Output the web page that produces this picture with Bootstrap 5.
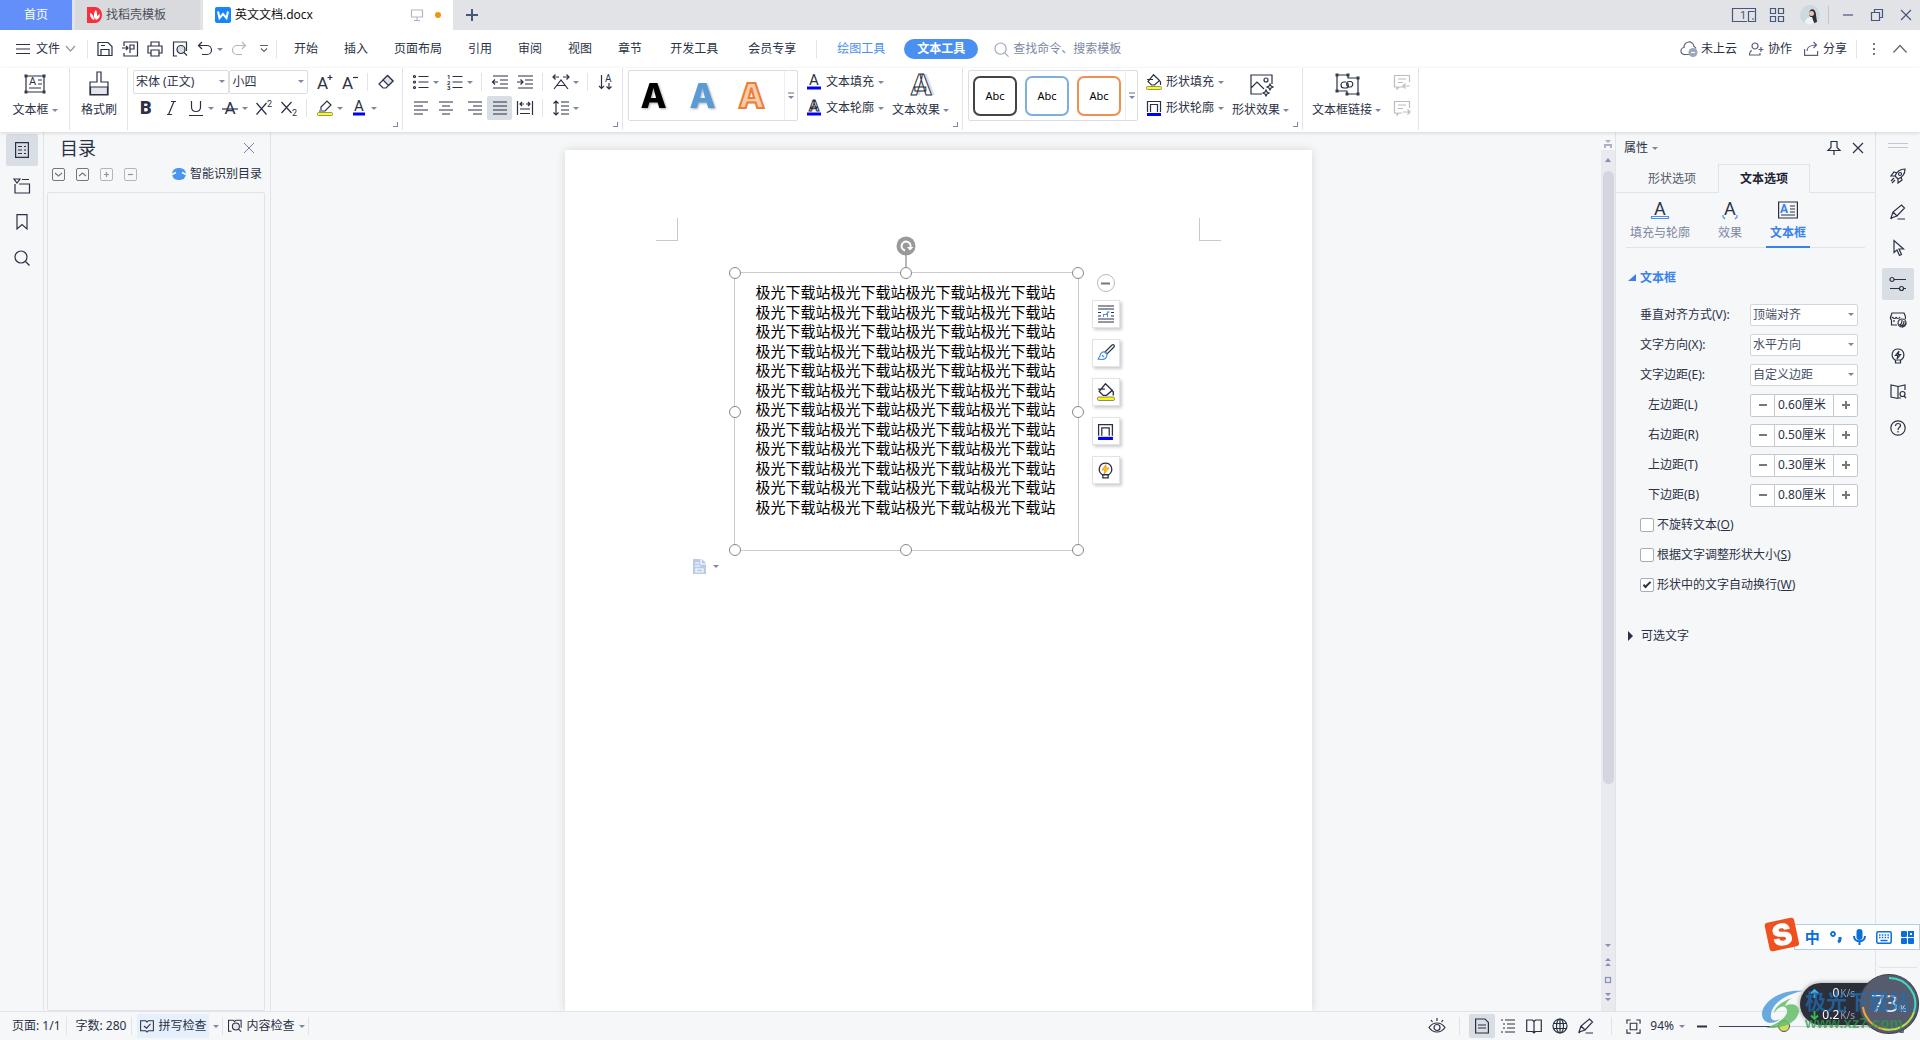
<!DOCTYPE html>
<html lang="zh-CN">
<head>
<meta charset="utf-8">
<meta name="viewport" content="width=device-width, initial-scale=1">
<title>英文文档.docx</title>
<link rel="stylesheet" href="https://cdn.jsdelivr.net/npm/bootstrap@5.3.0/dist/css/bootstrap.min.css">
<script src="https://cdn.jsdelivr.net/npm/bootstrap@5.3.0/dist/js/bootstrap.bundle.min.js"></script>
<style>
:root{--ink:#2a3145;--line:#e1e3e8;--panel:#f6f7f9;--muted:#7d87a2;--accent:#3a82e8;--hot:#d9dde4}
body{font:12px/16px "Noto Sans","Noto Sans CJK SC",sans-serif;color:var(--ink);background:var(--panel);height:100vh;overflow:hidden}
svg{fill:none;flex:none;overflow:visible}
svg:not([stroke]){stroke:currentColor}
svg:not([stroke-width]){stroke-width:1.2}
svg text{fill:currentColor;stroke:none;font-family:Roboto,sans-serif}
.bt{display:inline-flex;align-items:center;justify-content:center;border:0;border-radius:2px;padding:0;font-size:12px;line-height:16px;color:var(--ink);white-space:nowrap;flex:none}
.sq{width:25px;height:24px}
.on{background:var(--hot)}
.tri{border:3px solid transparent;border-top-color:var(--muted);border-bottom:0;width:6px;height:3px;display:inline-block;flex:none}
.cr{width:9px;justify-content:flex-start;height:24px}
.vr1{width:1px;align-self:center;background:var(--line);height:18px;margin:0 5px;flex:none}
/* title bar */
.titlebar{height:30px;background:#e1e3e7;color:#48567c;flex:none}
.tab-home,.tab-home:hover{width:72px;background:#638ffb;color:#fff;border-radius:0}
.tab-doc{height:30px;text-decoration:none;color:#4b4f59}
.tab-shop{width:125px;background:#d9dadd;margin:0 3px}
.tab-open{width:250px;background:#fff;color:#111}
.dot{width:6px;height:6px;border-radius:50%;background:#e8990c}
.win{width:29px;height:30px;color:#48567c}
/* menu */
.menubar{height:38px;background:#fff;flex:none}
.filemenu{gap:6px}
.menubar a{color:var(--ink);text-decoration:none;padding:0 13px;white-space:nowrap}
.menubar a.wide{padding:0 15px}
.menubar a.draw{color:#4a90f0;padding:0 19px 0 15px}
.menubar a.pill{background:#4a8ff2;color:#fff;font-weight:700;border-radius:10px;line-height:20px}
.finder{border:0;outline:0;width:140px;padding:0;color:var(--muted);font-size:12px;line-height:16px}
.finder::placeholder{color:var(--muted)}
/* ribbon */
.ribbon{height:64px;background:#fff;box-shadow:0 1px 4px #0002;flex:none;position:relative;z-index:3}
.grp{border-right:1px solid var(--line);height:62px;padding:2px 4px 0 5px;position:relative;flex:none}
.g-box{width:70px}.g-brush{width:58px}.g-font{width:275px}.g-para{width:220px}.g-art{width:340px}.g-link{width:116px}
.stack{display:flex;flex-direction:column;gap:2px}
.corner{position:absolute;right:4px;bottom:3px;width:5px;height:5px;border:solid var(--muted);border-width:0 1px 1px 0}
.big{flex-direction:column;height:50px;gap:5px;justify-content:flex-end;padding-bottom:2px}
.big svg{width:26px;height:26px}
.lab{display:flex;align-items:center;gap:3px}
.fontpick{position:relative}
.face{width:97px}.size{width:79px}
.fontpick::after,.pick::after{content:"";position:absolute;right:4px;top:50%;margin-top:-2px;border:3px solid transparent;border-top-color:var(--muted);border-bottom:0;pointer-events:none}
.fontpick select,.pick select{appearance:none;border:1px solid #dcdee3;background:#fff;font-size:12px;line-height:16px;color:var(--ink);width:100%;height:24px;padding:0 2px;border-radius:2px}
.gal{width:170px;height:51px;border:1px solid #dcdee3;border-radius:2px}
.gal .more{width:13px;border-left:1px solid #eceef1;border-radius:0;align-self:stretch}
.gal .more svg{color:var(--muted)}
.art{font:800 34px/44px Inter,sans-serif;width:49px;height:49px;color:#000;filter:drop-shadow(1px 1px 1px #0005)}
.art.sky{color:#5b9bd5}
.art.hollow{color:#f8cbad;-webkit-text-stroke:2px #ed7d31;filter:none}
.chip{width:44px;height:40px;border:2px solid #444;border-radius:7px;background:#fff;margin:0 4px;font-size:11px;color:#000}
.chip.sky{border-color:#7db0e0}.chip.sun{border-color:#f0904f}
.rt{gap:4px;height:24px}
.outl{fill:#fff;stroke:#2a3145;stroke-width:1}
/* panels */
.rail{width:44px;border-right:1px solid var(--line);gap:4px;padding-top:2px}
.rail .bt{width:32px;height:32px}
.toc{width:227px;border-right:1px solid var(--line)}
.toc h1{font-size:18px;line-height:24px;font-weight:400;margin:0}
.tools{padding:6px 8px;gap:11px}
.tocbox{border:1px solid var(--line);border-radius:2px;margin:4px 5px 0 3px}
.mini{width:13px;height:13px;border:1px solid #777;border-radius:2px;color:#777}
.mini:disabled{border-color:#777;opacity:.5}
/* canvas */
.canvas{padding:18px 0 0 4px;overflow:hidden}
.sheet{width:747px;background:#fff;box-shadow:0 0 9px #0002;position:relative}
.crop{position:absolute;top:68px;width:22px;height:23px;border:solid #c9c9c9;border-width:0 0 1px}
.crop.l{left:91px;border-right-width:1px}.crop.r{right:91px;border-left-width:1px}
.tbox{position:absolute;left:169px;top:122px;width:345px;height:279px;border:1px solid #cbcbd0;padding:11px 21px 36px}
.tbox p{margin:0;font:15px/15px "Noto Sans CJK SC",sans-serif;color:#000;white-space:nowrap}
.hd{position:absolute;width:12px;height:12px;border:1px solid #888;border-radius:50%;background:#fff;margin:-6px}
.float{position:absolute;left:527px;top:124px;gap:11px}
.float .bt{width:28px;height:28px;background:#fff;border:1px solid #e3e3e6;border-radius:0;box-shadow:2px 2px 3px #0003}
.float .fold{width:18px;height:18px;border-radius:50%;border:1px solid #bbb;box-shadow:none;margin-bottom:-3px}
.paste{position:absolute;left:128px;top:409px;gap:7px}
.sbar{width:14px;background:#e9eaf0;color:#8791ad}
.sbar .cap{height:18px;background:var(--panel)}
.thumb{width:11px;height:613px;border-radius:6px;background:#d3d6e0}
/* properties */
.props{width:261px;border-left:1px solid var(--line);border-right:1px solid var(--line)}
.phead{height:32px}
.ptabs{border-bottom:1px solid var(--line);padding-left:10px;height:29px}
.ptabs .bt{width:92px;height:29px;border-radius:0;color:#555b6b}
.ptabs .cur{border:1px solid var(--line);border-bottom:0;background:var(--panel);font-weight:700;color:#1c2233}
.stabs{margin:0 10px;border-bottom:1px solid var(--line);height:55px}
.stabs .bt{flex-direction:column;gap:6px;color:var(--muted);border-radius:0;border-bottom:2px solid transparent;height:55px;justify-content:flex-end;padding-bottom:5px}
.stabs svg{color:var(--ink)}
.stabs .cur{color:var(--accent);font-weight:700;border-color:var(--accent)}
.sect{color:var(--accent);font-weight:700;height:28px}
.prow{height:30px}
.later{margin-top:21px}
.prow label.nm{width:110px}
.pick{width:108px;position:relative}
.pick select{height:22px;color:#454e66;border-color:#d3d6dc}
.stepper{width:108px;height:23px;border:1px solid #c4c8d0;border-radius:2px;background:#fff}
.stepper .bt{width:23px;color:#777}
.stepper input{width:60px;border:solid #c4c8d0;border-width:0 1px;padding:0 0 0 3px;font-size:12px;line-height:16px;color:var(--ink);outline:0}
.tick{appearance:none;width:14px;height:14px;border:1px solid #a9adb8;border-radius:2px;background:#fff;margin:0 3px 0 0;position:relative}
.tick:checked::after{content:"";position:absolute;left:4px;top:1px;width:4px;height:8px;border:solid var(--ink);border-width:0 2px 2px 0;transform:rotate(45deg)}
.rr{width:44px;gap:4px;padding-top:10px}
.rr .bt{width:32px;height:32px}
.rrfoot{width:38px;height:44px;border-top:1px solid var(--line)}
/* status */
.status{height:29px;border-top:1px solid var(--line);flex:none}
.status .sq{width:26px}
.spell{background:#e6effc;height:24px;padding:0 3px;border-radius:0}
.pct{gap:5px}
.zoomer{appearance:none;width:163px;height:14px;background:none;margin:0}
.zoomer::-webkit-slider-runnable-track{height:1px;background:linear-gradient(90deg,#3a4258 40%,#c9cdd6 40%)}
.zoomer::-webkit-slider-thumb{appearance:none;width:12px;height:12px;margin-top:-6px;border:1px solid #555;border-radius:50%;background:#d3dc62}
/* desktop overlays */
.ime{position:fixed;right:0;top:924px;width:126px;height:26px;background:#fff;border:1px solid #b5cdec;color:#0a6fd8;padding-left:5px;z-index:5}
.ime strong{font-size:15px}
.sogou{position:fixed;right:120px;top:917px;z-index:6}
.sogou text{font:900 30px Inter,sans-serif;fill:#fff;text-anchor:middle}
.speed{position:fixed;right:30px;top:983px;width:90px;height:42px;border-radius:21px;background:#2b2f3a;box-shadow:0 0 5px #0006;color:#fff;z-index:5;padding:2px 35px 2px 11px;font-size:12px}
.speed em{font-style:normal;font-size:10px;color:#9aa0ae;margin-left:1px}
.ball{position:fixed;right:1px;top:974px;z-index:7}
.ball text{font-family:"Noto Sans",sans-serif;fill:#d9ecfa}
.brand{position:fixed;right:10px;top:986px;z-index:8;pointer-events:none}
.brand .cn{font:700 21px/28px "Noto Sans CJK SC",sans-serif;color:#1f6fb5bb}
.brand .en{font:700 15px/18px "Liberation Sans",sans-serif;color:#2f9b45bb}
</style>
</head>
<body class="d-flex flex-column">
<svg width="0" height="0" class="position-absolute" aria-hidden="true">
<symbol id="bucket" viewBox="0 0 16 16"><path d="M7.500 .7 13 6v1l-4.500 4H5.500L2 7.500zM1 5.500h6M13 6l1.500 2v3"/><rect x=".5" y="12.500" width="15" height="3" rx="1" fill="#ff0" stroke="#777" stroke-width=".8"/></symbol>
<symbol id="frame" viewBox="0 0 16 16"><path d="M1.500 12V1.500h13V12M4.500 12V4.500h7V12"/><path d="M1 14.500h14" stroke="#00f" stroke-width="3"/></symbol>
<symbol id="search" viewBox="0 0 16 16"><circle cx="7" cy="7" r="6"/><path d="m11.500 11.500 4 4"/></symbol>
<symbol id="book" viewBox="0 0 16 16"><path d="M8 3.500 6.500 2H.7v11.500h5.800L8 15l1.500-1.500h5.800V2H9.500L8 3.500V15"/></symbol>
<symbol id="checkbook" viewBox="0 0 16 16"><path d="M8 3.500 6.500 2H.7v11.500h5.800L8 15l1.500-1.500h5.800V2H9.500zM4.500 8l3 2.500L12 5.500"/></symbol>
<symbol id="more" viewBox="0 0 8 8"><path d="M1 1h6"/><path d="M1 4h6L4 7z" fill="currentColor" stroke="none"/></symbol>
<symbol id="full" viewBox="0 0 16 16"><path d="M5 1H1v4M11 1h4v4M5 15H1v-4M11 15h4v-4"/><path d="M4.500 4.500h7v7h-7z"/></symbol>
<symbol id="pen" viewBox="0 0 16 16"><path d="m1 14 2-6 8.500-7 3 3L7 12zM3 8l4 4M7.500 15H15M1 15l1-1"/></symbol>
<symbol id="bulb" viewBox="0 0 16 16"><path d="M5 12C0 8.500 2 1 8 1s8 7.500 3 11zM5.500 12v3h5v-3"/></symbol>
<symbol id="minus" viewBox="0 0 8 8"><path d="M0 4h8"/></symbol>
<symbol id="plus" viewBox="0 0 8 8"><path d="M0 4h8M4 0v8"/></symbol>
</svg>

<header class="titlebar d-flex align-items-center">
  <button class="btn bt tab-home h-100">首页</button>
  <a href="#" class="tab-doc tab-shop d-flex align-items-center gap-1 ps-2"><svg class="ms-1" width="15" height="16"><path d="M0 0h8a7 8 0 0 1 0 16H0z" fill="#f9303c" stroke="none"/><path d="M7 13C3 11 3 8 3 6c3 1 4 4 4 7M8 13C6 8 7 5 9 3c2 4 1 7-1 10M9 13c0-4 2-5 4-6 0 3-1 5-4 6" fill="#fff" stroke="none"/></svg>找稻壳模板</a>
  <a href="#" class="tab-doc tab-open d-flex align-items-center gap-1 px-2"><svg class="ms-1" width="16" height="16"><rect width="16" height="16" rx="2" fill="#1687fb" stroke="none"/><path d="M3 4.500 4.500 11 8 7l3.500 4L13 4.500" stroke="#fff" stroke-width="2"/></svg>英文文档.docx
    <svg class="ms-auto me-2" width="12" height="12" stroke="#aeb7ca"><path d="M.5 1h11v7H.5zM6 8v3M3 11.500h6"/></svg><span class="dot me-1"></span></a>
  <button class="btn bt win ms-1" aria-label="新建"><svg width="12" height="12" stroke-width="2"><path d="M6 0v12M0 6h12"/></svg></button>
  <div class="ms-auto d-flex align-items-center">
    <button class="btn bt win me-1" aria-label="窗口"><svg width="24" height="14"><path d="M15 13.500H.5V.5h23v13h-7V3.500h6M20 11h2"/><text x="8" y="11" font-size="11">1</text></svg></button>
    <button class="btn bt win me-1" aria-label="应用"><svg width="14" height="14"><path d="M.5.5h5v5h-5zM8.500.5h5v5h-5zM.5 8.500h5v5h-5zM8.500 8.500h5v5h-5z"/></svg></button>
    <button class="btn bt win" aria-label="账号"><svg width="20" height="20"><circle cx="10" cy="10" r="10" fill="#ccdae0" stroke="none"/><path d="M9 10c0-8 7-7 7 0l1 7-3 1-2-4z" fill="#302a33" stroke="none"/><circle cx="11.500" cy="8.500" r="2.500" fill="#e9c4b8" stroke="none"/><path d="M5 18c0-4 3-6 7-6l2 6-4 2z" fill="#eef4f6" stroke="none"/></svg></button>
    <span class="vr1 mx-1 bg-secondary bg-opacity-25"></span>
    <button class="btn bt win" aria-label="最小化"><svg width="10" height="10"><path d="M0 5h10"/></svg></button>
    <button class="btn bt win" aria-label="还原"><svg width="12" height="12"><path d="M.5 3.500h8v8h-8zM3.500 3.500v-3h8v8h-3"/></svg></button>
    <button class="btn bt win" aria-label="关闭"><svg width="10" height="10"><path d="m0 0 10 10M10 0 0 10"/></svg></button>
  </div>
</header>

<nav class="menubar d-flex align-items-center">
  <button class="btn bt filemenu ms-3 pe-1"><svg width="14" height="10"><path d="M0 .5h14M0 5h14M0 9.500h14"/></svg>文件<svg width="9" height="6" stroke="#999"><path d="m0 0 4.500 5L9 0"/></svg></button>
  <span class="vr1 ms-2 me-1"></span>
  <button class="btn bt sq" aria-label="保存"><svg width="16" height="16"><path d="M1 1.500h10l4 4v9H1zM4 14.500v-6h8v6M4 4.500h4"/></svg></button>
  <button class="btn bt sq" aria-label="输出"><svg width="16" height="16"><path d="M2 5V1h13.500v14H2v-3M0 7h6M4 5l2 2-2 2M8 12V4h4v4H8"/></svg></button>
  <button class="btn bt sq" aria-label="打印"><svg width="16" height="16"><path d="M4 5V1h8v4M3.500 12H1V5h14v7h-2.500M4 9h8v6H4z"/></svg></button>
  <button class="btn bt sq" aria-label="打印预览"><svg width="16" height="16"><path d="M5 15H1.500V1h13v9"/><circle cx="9" cy="8.500" r="4" fill="#d9dde4"/><path d="m12 11.500 3 3"/></svg></button>
  <button class="btn bt sq" aria-label="撤销"><svg width="16" height="16"><path d="M5 1 1.500 4.500 5 8M1.500 4.500H10a4.500 4.500 0 0 1 0 9H5"/></svg></button>
  <button class="btn bt cr" aria-label="更多撤销"><i class="tri"></i></button>
  <button class="btn bt sq" aria-label="恢复"><svg width="16" height="16" stroke="#b4b6bb"><path d="M11 1l3.500 3.500L11 8M14.500 4.500H6a4.500 4.500 0 0 0 0 9h5"/></svg></button>
  <button class="btn bt sq" aria-label="自定义"><svg width="8" height="8" stroke="#666"><path d="M0 .5h8M1 3.500l3 3 3-3"/></svg></button>
  <span class="vr1 ms-0 me-1"></span>
  <a href="#">开始</a><a href="#">插入</a><a href="#">页面布局</a><a href="#">引用</a><a href="#">审阅</a><a href="#">视图</a><a href="#">章节</a><a href="#" class="wide">开发工具</a><a href="#" class="wide">会员专享</a>
  <span class="vr1"></span>
  <a href="#" class="draw">绘图工具</a><a href="#" class="pill">文本工具</a>
  <label class="d-flex align-items-center ms-3"><svg width="15" height="15" stroke="#9aa3b8"><use href="#search"/></svg><input class="finder ms-1" placeholder="查找命令、搜索模板" aria-label="查找"></label>
  <div class="ms-auto d-flex align-items-center">
    <button class="btn bt gap-1 me-2"><svg width="16" height="15" stroke="#59617a"><path d="M8 12.500H4A3.500 3.500 0 0 1 3 5.500a5 5 0 0 1 10-1 3.500 3.500 0 0 1 2 2"/><circle cx="12" cy="10.500" r="4.500" fill="#9ba5bb" stroke="none"/><path d="M10 10.500h4" stroke="#fff"/></svg>未上云</button>
    <button class="btn bt gap-1 mx-1"><svg width="15" height="14" stroke="#59617a"><circle cx="6" cy="4" r="3"/><path d="M3 8.500C1 9 .5 11 .5 13h10.500v-2M9.500 7.500h5M12 5v5"/></svg>协作</button>
    <button class="btn bt gap-1 mx-1"><svg class="ms-1" width="15" height="14" stroke="#59617a"><path d="M.6 7v6.400h13V9M3 9c0-4 4-6 9-6M9.500 0l3 3-3 3"/></svg>分享</button>
    <span class="vr1"></span>
    <button class="btn bt sq" aria-label="更多"><svg width="3" height="12"><path d="M0 0h2v2H0zM0 5h2v2H0zM0 10h2v2H0z" fill="#777" stroke="none"/></svg></button>
    <button class="btn bt sq me-2" aria-label="收起"><svg width="14" height="8" stroke="#666"><path d="m.5 7.500 6.500-7 6.500 7"/></svg></button>
  </div>
</nav>

<section class="ribbon d-flex align-items-start">
  <div class="grp g-box d-flex justify-content-center"><button class="btn bt big"><svg viewBox="0 0 26 26"><path d="M4 5h18v16H4zM16 9h4M16 13h4M7 17h12"/><path d="M2.500 3.500h3v3h-3zM20.500 3.500h3v3h-3zM2.500 19.500h3v3h-3zM20.500 19.500h3v3h-3z" fill="#333b50" stroke="none"/><text x="7" y="14" font-size="11">A</text></svg><span class="lab">文本框<i class="tri"></i></span></button></div>
  <div class="grp g-brush d-flex justify-content-center"><button class="btn bt big"><svg viewBox="0 0 26 26"><path d="M11 1h4v10h7v13H4V11h7z"/><path d="M4.500 16h17v7.500h-17z" fill="#e4e6ea"/></svg>格式刷</button></div>
  <div class="grp g-font stack">
    <div class="d-flex"><div class="fontpick face"><select aria-label="字体"><option>宋体 (正文)</option></select></div><div class="fontpick size me-1"><select aria-label="字号"><option>小四</option></select></div>
      <button class="btn bt sq" aria-label="增大字号"><svg width="16" height="16"><text x="0" y="15" font-size="17">A</text><path d="M13 1v5M10.500 3.500h5"/></svg></button>
      <button class="btn bt sq" aria-label="减小字号"><svg width="16" height="16"><text x="0" y="15" font-size="17">A</text><path d="M11 3.500h5"/></svg></button><span class="vr1"></span>
      <button class="btn bt sq" aria-label="清除格式"><svg width="16" height="16"><path d="M9.500 1.500 15 7l-7 7H5L1 10z" /><path d="M9.500 1.500 15 7l-4.500 4.500L5 6z" fill="#e0e2e7"/></svg></button></div>
    <div class="d-flex">
      <button class="btn bt sq" aria-label="加粗"><svg width="16" height="16"><text x="2" y="14" font-size="18" font-weight="900">B</text></svg></button>
      <button class="btn bt sq" aria-label="倾斜"><svg width="16" height="16"><path d="M11 1.500 5.500 14.500M8 1.500h5M4 14.500h5"/></svg></button>
      <button class="btn bt sq" aria-label="下划线"><svg width="16" height="16"><path d="M3.500 1v6c0 6 9 6 9 0V1M1 15.500h14"/></svg></button><button class="btn bt cr" aria-label="下划线样式"><i class="tri"></i></button>
      <button class="btn bt sq" aria-label="删除线"><svg width="16" height="16"><text x="2.500" y="14" font-size="17">A</text><path d="M0 9h16"/></svg></button><button class="btn bt cr" aria-label="删除线样式"><i class="tri"></i></button>
      <button class="btn bt sq" aria-label="上标"><svg width="16" height="16"><path d="m.5 3 10 11.500M10.500 3 .5 14.500"/><text x="11" y="7" font-size="9">2</text></svg></button>
      <button class="btn bt sq" aria-label="下标"><svg width="16" height="16"><path d="M.5 2l10 11M10.500 2l-10 11"/><text x="11" y="16" font-size="9">2</text></svg></button><span class="vr1"></span>
      <button class="btn bt sq" aria-label="突出显示"><svg width="16" height="16"><path d="M4 10V7l6-6 4 4-6 6H2"/><rect x=".5" y="12.500" width="15" height="3" rx="1" fill="#ff0" stroke="#777" stroke-width=".8"/></svg></button><button class="btn bt cr" aria-label="突出显示颜色"><i class="tri"></i></button>
      <button class="btn bt sq" aria-label="字体颜色"><svg width="16" height="16"><text x="3" y="11" font-size="15">A</text><path d="M2 14h12" stroke="#00f" stroke-width="3"/></svg></button><button class="btn bt cr" aria-label="更多颜色"><i class="tri"></i></button>
    </div><i class="corner"></i>
  </div>
  <div class="grp g-para stack">
    <div class="d-flex">
      <button class="btn bt sq" aria-label="项目符号"><svg width="16" height="16"><path d="M5.500 2.500h10M5.500 8h10M5.500 13.500h10"/><circle cx="1.500" cy="2.500" r="1"/><circle cx="1.500" cy="8" r="1"/><circle cx="1.500" cy="13.500" r="1"/></svg></button><button class="btn bt cr" aria-label="符号样式"><i class="tri"></i></button>
      <button class="btn bt sq" aria-label="编号"><svg width="16" height="16"><path d="M5.500 2.500h10M5.500 8h10M5.500 13.500h10"/><g font-weight="700"><text x="0" y="5" font-size="6">1</text><text x="0" y="10.500" font-size="6">2</text><text x="0" y="16" font-size="6">3</text></g></svg></button><button class="btn bt cr" aria-label="编号样式"><i class="tri"></i></button><span class="vr1"></span>
      <button class="btn bt sq" aria-label="减少缩进"><svg width="16" height="16"><path d="M1 2h15M8 6h8M8 10h8M1 14h15M6 8H.5M3 5.500.5 8 3 10.500"/></svg></button>
      <button class="btn bt sq" aria-label="增加缩进"><svg width="16" height="16"><path d="M1 2h15M8 6h8M8 10h8M1 14h15M0 8h6M3.500 5.500 6 8l-2.500 2.500"/></svg></button><span class="vr1"></span>
      <button class="btn bt sq" aria-label="中文版式"><svg width="16" height="16"><path d="M0 3h6M2.500.5 0 3l2.500 2.500M10 3h6M13.500.5 16 3l-2.500 2.500M1 15l7-9 7 9M4 11.500h8"/></svg></button><button class="btn bt cr" aria-label="更多版式"><i class="tri"></i></button><span class="vr1"></span>
      <button class="btn bt sq" aria-label="排序"><svg width="16" height="16"><path d="M3.500 1v13.500M1 12l2.500 2.500L6 12M11 9v6M8.500 12.500 11 15l2.500-2.500"/><text x="7" y="8" font-size="10">A</text></svg></button></div>
    <div class="d-flex">
      <button class="btn bt sq" aria-label="左对齐"><svg width="16" height="16"><path d="M1 2h14M1 6h9M1 10h14M1 14h9"/></svg></button>
      <button class="btn bt sq" aria-label="居中"><svg width="16" height="16"><path d="M1 2h14M4 6h8M1 10h14M4 14h8"/></svg></button>
      <button class="btn bt sq ms-1" aria-label="右对齐"><svg width="16" height="16"><path d="M1 2h14M6 6h9M1 10h14M6 14h9"/></svg></button>
      <button class="btn bt sq on" aria-label="两端对齐"><svg width="16" height="16"><path d="M1 2h14M1 6h14M1 10h14M1 14h14"/></svg></button>
      <button class="btn bt sq" aria-label="分散对齐"><svg width="16" height="16"><path d="M.5 1v14M15.500 1v14M3 9h10M3 13.500h10M3 4h4M5 2 3 4l2 2M9 4h4M11 2l2 2-2 2"/></svg></button><span class="vr1"></span>
      <button class="btn bt sq" aria-label="行距"><svg width="16" height="16"><path d="M3 1v14M.5 3.500 3 1l2.500 2.500M.5 12.500 3 15l2.500-2.500M8 2h8M8 6h8M8 10h8M8 14h8"/></svg></button><button class="btn bt cr" aria-label="更多行距"><i class="tri"></i></button>
    </div><i class="corner"></i>
  </div>
  <div class="grp g-art d-flex">
    <div class="gal d-flex align-items-center"><button class="btn bt art">A</button><button class="btn bt art sky">A</button><button class="btn bt art hollow">A</button><button class="btn bt more ms-auto" aria-label="更多样式"><svg width="8" height="8"><use href="#more"/></svg></button></div>
    <div class="stack ms-2"><button class="btn bt rt"><svg width="16" height="16"><text x="3" y="11" font-size="15">A</text><path d="M1 14h14" stroke="#00f" stroke-width="3"/></svg>文本填充<i class="tri"></i></button><button class="btn bt rt"><svg width="16" height="16"><text class="outl" x="3" y="11" font-size="15" font-weight="700">A</text><path d="M1 14h14" stroke="#00f" stroke-width="3"/></svg>文本轮廓<i class="tri"></i></button></div>
    <button class="btn bt big ms-2"><svg viewBox="0 0 26 26"><text x="6" y="24" font-size="30" font-weight="900" style="fill:#dfe1e6">A</text><text class="outl" x="3" y="24" font-size="30" font-weight="900">A</text></svg><span class="lab">文本效果<i class="tri"></i></span></button><i class="corner"></i>
  </div>
  <div class="grp g-art d-flex">
    <div class="gal d-flex align-items-center"><button class="btn bt chip">Abc</button><button class="btn bt chip sky">Abc</button><button class="btn bt chip sun">Abc</button><button class="btn bt more ms-auto" aria-label="更多形状样式"><svg width="8" height="8"><use href="#more"/></svg></button></div>
    <div class="stack ms-2"><button class="btn bt rt"><svg width="16" height="16"><use href="#bucket"/></svg>形状填充<i class="tri"></i></button><button class="btn bt rt"><svg width="16" height="16"><use href="#frame"/></svg>形状轮廓<i class="tri"></i></button></div>
    <button class="btn bt big ms-2"><svg viewBox="0 0 26 26"><path d="M14 23H3V4h21v9M3 17l6-6 7 7"/><circle cx="18" cy="9" r="2"/><path d="m22 13 1 2 2 1-2 1-1 2-1-2-2-1 2-1zM18 19l1 2 2 1-2 1-1 2-1-2-2-1 2-1z"/></svg><span class="lab">形状效果<i class="tri"></i></span></button><i class="corner"></i>
  </div>
  <div class="grp g-link d-flex"><button class="btn bt big ms-1"><svg viewBox="0 0 26 26"><path d="M3 4h11v3h10v16H13v-3H3z"/><path d="M1.500 2.500h3v3h-3zM12.500 2.500h3v3h-3zM22.500 5.500h3v3h-3zM1.500 18.500h3v3h-3zM11.500 21.500h3v3h-3zM22.500 21.500h3v3h-3z" fill="#333b50" stroke="none"/><path d="M12 11H10a3 3 0 0 0 0 6h2c3 0 3-4 1-5M14 16h3a3 3 0 0 0 0-5.500h-2c-3 0-3 4-1 5"/></svg><span class="lab">文本框链接<i class="tri"></i></span></button>
    <div class="stack ms-2"><button class="btn bt sq" aria-label="前一文本框" disabled><svg width="16" height="16" stroke="#999"><path d="M9 13H5l-2 2v-2H.5V1.500h15V8M4 5h8M4 8.500h5M16 12H9M11.500 9.500 9 12l2.500 2.500"/></svg></button><button class="btn bt sq" aria-label="后一文本框" disabled><svg width="16" height="16" stroke="#999"><path d="M8 13H5l-2 2v-2H.5V1.500h15V8M4 5h8M4 8.500h5M9 12h7M13.500 9.500 16 12l-2.500 2.500"/></svg></button></div></div>
</section>

<main class="d-flex flex-grow-1 overflow-hidden">
  <nav class="rail d-flex flex-column align-items-center">
    <button class="btn bt on" aria-label="目录"><svg width="14" height="16"><path d="M.6.600h12.800v14.800H.6zM3 4.500h4M3 8h4M3 11.500h4M9 4.500h2M9 8h2M9 11.500h2"/></svg></button>
    <button class="btn bt" aria-label="导航"><svg width="16" height="16"><path d="M0 1h6L3 5zM8 1.500h7M1 6v9h14.500V6H5"/></svg></button>
    <button class="btn bt" aria-label="书签"><svg width="12" height="16"><path d="M1 .6h10V15l-5-4.500L1 15z"/></svg></button>
    <button class="btn bt" aria-label="查找"><svg width="16" height="16"><use href="#search"/></svg></button>
  </nav>
  <aside class="toc d-flex flex-column">
    <div class="d-flex align-items-center ps-3 pe-3 pt-1"><h1 class="me-auto">目录</h1><button class="btn bt" aria-label="关闭目录"><svg width="10" height="10" stroke="#7a84a0" stroke-width="1"><path d="m0 0 10 10M10 0 0 10"/></svg></button></div>
    <div class="tools d-flex align-items-center">
      <button class="btn bt mini" aria-label="展开"><svg width="7" height="5"><path d="m0 1 3.500 3L7 1"/></svg></button><button class="btn bt mini" aria-label="收起"><svg width="7" height="5"><path d="m0 4 3.500-3L7 4"/></svg></button><button class="btn bt mini" disabled aria-label="增加"><svg width="5" height="5"><path d="M0 2.500h5M2.500 0v5"/></svg></button><button class="btn bt mini" disabled aria-label="减少"><svg width="5" height="5"><path d="M0 2.500h5"/></svg></button>
      <button class="btn bt gap-1 ms-auto"><svg width="14" height="12"><rect width="14" height="12" rx="6" fill="#4a95ef" stroke="none"/><path d="M0 6.500 4 4.500M10 4.500l4 2" stroke="#fff" stroke-width="1.500"/></svg>智能识别目录</button></div>
    <div class="tocbox flex-grow-1"></div>
  </aside>
  <section class="canvas flex-grow-1 d-flex justify-content-center">
    <article class="sheet">
      <i class="crop l"></i><i class="crop r"></i>
      <div class="tbox d-flex flex-column justify-content-between">
        <p>极光下载站极光下载站极光下载站极光下载站</p><p>极光下载站极光下载站极光下载站极光下载站</p><p>极光下载站极光下载站极光下载站极光下载站</p><p>极光下载站极光下载站极光下载站极光下载站</p><p>极光下载站极光下载站极光下载站极光下载站</p><p>极光下载站极光下载站极光下载站极光下载站</p><p>极光下载站极光下载站极光下载站极光下载站</p><p>极光下载站极光下载站极光下载站极光下载站</p><p>极光下载站极光下载站极光下载站极光下载站</p><p>极光下载站极光下载站极光下载站极光下载站</p><p>极光下载站极光下载站极光下载站极光下载站</p><p>极光下载站极光下载站极光下载站极光下载站</p>
        <i class="hd start-0 top-0"></i><i class="hd start-50 top-0"></i><i class="hd start-100 top-0"></i><i class="hd start-0 top-50"></i><i class="hd start-100 top-50"></i><i class="hd start-0 top-100"></i><i class="hd start-50 top-100"></i><i class="hd start-100 top-100"></i>
        <svg class="position-absolute start-50 bottom-100 translate-middle-x mb-1" width="20" height="33"><path d="M10 19v13" stroke="#888"/><circle cx="10" cy="10" r="9.500" fill="#999" stroke="none"/><path d="M9 14.500A4.500 4.500 0 1 1 14.500 11" stroke="#fff" stroke-width="2"/><path d="M11 11h6.500L14 14.500z" fill="#fff" stroke="none"/></svg>
      </div>
      <div class="float d-flex flex-column align-items-center">
        <button class="btn bt fold" aria-label="收起"><svg width="9" height="3" stroke="#777" stroke-width="2"><path d="M0 1.500h9"/></svg></button>
        <button class="btn bt" aria-label="环绕"><svg width="16" height="16"><path d="M0 0h16M0 3h16M0 6.500h3M13 6.500h3M0 10h3M13 10h3M0 13h16M0 16h16"/><path d="M5 11V8h3l2-3 2 1-2 1v4H9V9H6v2z" fill="#4a90e8" stroke="none"/></svg></button>
        <button class="btn bt" aria-label="样式"><svg width="18" height="18"><path d="m8 8 7-7c2-1 3 1 2 2l-7 7z"/><path d="M8 8c-3-1-5 2-5 4L1 15c4 1 9 1 9-5zM5 11l2 2" stroke="#4a90e8"/></svg></button>
        <button class="btn bt" aria-label="填充"><svg width="18" height="18"><use href="#bucket"/></svg></button>
        <button class="btn bt" aria-label="轮廓"><svg width="17" height="17"><use href="#frame"/></svg></button>
        <button class="btn bt" aria-label="提示"><svg width="17" height="17"><use href="#bulb"/><path d="M9 2.500 5 8h3l-1 4 5-6H9z" fill="#ffc61a" stroke="#e8850c" stroke-width=".7"/></svg></button>
      </div>
      <div class="paste d-flex align-items-center"><svg width="13" height="15"><path d="M0 0h9l4 4v11H0z" fill="#b8cbe8" stroke="none"/><path d="M8 0v5h5M2 4h4M2 7h5M3 10h7v3H3z" stroke="#fff"/></svg><i class="tri"></i></div>
    </article>
  </section>
  <div class="sbar d-flex flex-column align-items-center">
    <div class="cap w-100 d-flex justify-content-center"><svg class="mt-2" width="8" height="8"><path d="M1 0h6L4 3zM0 4h8v4H6V6H2v2H0z" fill="#a9b1c6" stroke="none"/></svg></div>
    <svg class="my-2" width="6" height="5"><path d="M0 4h6L3 0z" fill="currentColor" stroke="none"/></svg>
    <div class="thumb"></div>
    <svg class="mt-auto mb-2" width="6" height="62"><g fill="currentColor" stroke="none"><path d="M0 3h6L3 6zM0 20h6l-3-3zM0 25h6l-3-3zM0 57h6l-3 3zM0 52h6l-3 3z"/></g><rect x=".5" y="36.500" width="5" height="5"/></svg>
  </div>
  <aside class="props">
    <div class="phead d-flex align-items-center px-2"><button class="btn bt gap-1">属性<i class="tri"></i></button><button class="btn bt ms-auto me-2" aria-label="固定"><svg width="14" height="14"><path d="M4 .5h6v6l3 3H1l3-3zM7 9.500V14"/></svg></button><button class="btn bt mx-1" aria-label="关闭属性"><svg width="10" height="10"><path d="m0 0 10 10M10 0 0 10"/></svg></button></div>
    <div class="ptabs d-flex"><button class="btn bt">形状选项</button><button class="btn bt cur">文本选项</button></div>
    <div class="stabs d-flex"><button class="btn bt px-1"><svg width="18" height="18"><text x="3" y="14" font-size="18">A</text><path d="M.5 15.500h17v2H.5z" stroke="#4a90e8"/></svg>填充与轮廓</button><button class="btn bt mx-4"><svg width="18" height="18"><text x="3" y="14" font-size="18">A</text><path d="M2 14v2l2 2M16 14v2l-2 2" stroke="#4a90e8"/></svg>效果</button><button class="btn bt cur px-1"><svg width="20" height="18"><path d="M.6 1h18.800v16H.6zM12 5h5M12 8h5M12 11h5M3 14h14"/><text x="2" y="12" font-size="12" style="fill:#3a82e8">A</text></svg>文本框</button></div>
    <div class="px-2 pt-3">
      <button class="btn bt sect gap-1 ms-1"><svg width="8" height="8"><path d="M8 0v7H0z" fill="currentColor" stroke="none"/></svg>文本框</button>
      <form class="ps-3 pt-2">
        <div class="prow d-flex align-items-center"><label class="nm" for="va">垂直对齐方式(V):</label><div class="pick"><select id="va"><option>顶端对齐</option></select></div></div>
        <div class="prow d-flex align-items-center"><label class="nm" for="td">文字方向(X):</label><div class="pick"><select id="td"><option>水平方向</option></select></div></div>
        <div class="prow d-flex align-items-center"><label class="nm" for="tm">文字边距(E):</label><div class="pick"><select id="tm"><option>自定义边距</option></select></div></div>
        <div class="prow d-flex align-items-center"><label class="nm ps-2" for="ml">左边距(L)</label><div class="stepper d-flex"><button type="button" class="btn bt" aria-label="减"><svg width="8" height="8" stroke-width="2"><use href="#minus"/></svg></button><input id="ml" value="0.60厘米"><button type="button" class="btn bt" aria-label="加"><svg width="8" height="8" stroke-width="2"><use href="#plus"/></svg></button></div></div>
        <div class="prow d-flex align-items-center"><label class="nm ps-2" for="mr">右边距(R)</label><div class="stepper d-flex"><button type="button" class="btn bt" aria-label="减"><svg width="8" height="8" stroke-width="2"><use href="#minus"/></svg></button><input id="mr" value="0.50厘米"><button type="button" class="btn bt" aria-label="加"><svg width="8" height="8" stroke-width="2"><use href="#plus"/></svg></button></div></div>
        <div class="prow d-flex align-items-center"><label class="nm ps-2" for="mt">上边距(T)</label><div class="stepper d-flex"><button type="button" class="btn bt" aria-label="减"><svg width="8" height="8" stroke-width="2"><use href="#minus"/></svg></button><input id="mt" value="0.30厘米"><button type="button" class="btn bt" aria-label="加"><svg width="8" height="8" stroke-width="2"><use href="#plus"/></svg></button></div></div>
        <div class="prow d-flex align-items-center"><label class="nm ps-2" for="mb">下边距(B)</label><div class="stepper d-flex"><button type="button" class="btn bt" aria-label="减"><svg width="8" height="8" stroke-width="2"><use href="#minus"/></svg></button><input id="mb" value="0.80厘米"><button type="button" class="btn bt" aria-label="加"><svg width="8" height="8" stroke-width="2"><use href="#plus"/></svg></button></div></div>
        <div class="prow d-flex align-items-center"><input class="tick" type="checkbox" id="c1"><label for="c1">不旋转文本(<u>O</u>)</label></div>
        <div class="prow d-flex align-items-center"><input class="tick" type="checkbox" id="c2"><label for="c2">根据文字调整形状大小(<u>S</u>)</label></div>
        <div class="prow d-flex align-items-center"><input class="tick" type="checkbox" id="c3" checked><label for="c3">形状中的文字自动换行(<u>W</u>)</label></div>
      </form>
      <button class="btn bt gap-2 ms-1 later prow"><svg width="5" height="10"><path d="M0 0v10l5-5z" fill="currentColor" stroke="none"/></svg>可选文字</button>
    </div>
  </aside>
  <nav class="rr d-flex flex-column align-items-center">
    <svg width="20" height="6" stroke="#c4c7cd" stroke-width="1"><path d="M0 1.500h20M0 5.500h20"/></svg>
    <button class="btn bt mt-2" aria-label="快捷"><svg width="16" height="16"><path d="M5 8c2-5 5-7 10-7 0 5-2 8-7 10zM5 8H1l3-4 3 1M8 11v4l4-3-1-3M4 10l-3 3M5 12l-3 3"/><circle cx="10" cy="6" r="1.500"/></svg></button>
    <button class="btn bt" aria-label="编辑"><svg width="16" height="16"><use href="#pen"/></svg></button>
    <button class="btn bt" aria-label="选择"><svg width="16" height="16"><path d="M4 .5v12l3-2.500 2.500 5.500 2-1L9 9h4.500z"/></svg></button>
    <button class="btn bt on" aria-label="属性"><svg width="16" height="16"><path d="M4 3.500h12M0 12.500h9M14 12.500h2"/><circle cx="2" cy="3.500" r="2"/><circle cx="11.500" cy="12.500" r="2"/></svg></button>
    <button class="btn bt" aria-label="图库"><svg width="16" height="16"><path d="M7 13H1.500V8C-.5 7 .5 5 2 1h12c2 4 2 5 1 6M2 5c2 2 4 2 4 0 1 2 3 2 4 0M4 8v2"/><circle cx="12" cy="11" r="4"/><path d="M9 13c2 0 3-2 3-5M10 14c3 0 4-2 4-5M12 15c2-1 3-2 4-4"/></svg></button>
    <button class="btn bt" aria-label="灵感"><svg width="16" height="16"><use href="#bulb"/><path d="M9 3 5.500 7.500H8L7 11l3.500-4.500H8z"/></svg></button>
    <button class="btn bt" aria-label="检索"><svg width="16" height="16"><path d="M8 14V2.500L1 1v12l7 1.500M8 2.500 15 1v5M8 14h3"/><circle cx="12.500" cy="10" r="2.500"/><path d="m14 12 2 2"/></svg></button>
    <button class="btn bt" aria-label="帮助"><svg width="16" height="16"><circle cx="8" cy="8" r="7.200"/><path d="M5.500 6c0-3.500 5-3 5-.5C10.500 7.500 8 7 8 10M8 11v1.500"/></svg></button>
    <div class="rrfoot mt-auto d-flex justify-content-center"><svg class="mt-4" width="16" height="8"><circle cx="2" cy="2" r="1.500"/><circle cx="8" cy="2" r="1.500"/><circle cx="14" cy="2" r="1.500"/></svg></div>
  </nav>
</main>

<footer class="status d-flex align-items-center">
  <span class="ps-2 ms-1">页面: 1/1</span><span class="vr1"></span><span class="ps-1">字数: 280</span><span class="vr1"></span>
  <button class="btn bt spell gap-1"><svg width="14" height="14"><use href="#checkbook"/></svg>拼写检查</button><button class="btn bt cr ms-1" aria-label="拼写选项"><i class="tri"></i></button><span class="vr1 ms-0"></span>
  <button class="btn bt gap-1"><svg width="14" height="14" viewBox="0 0 16 16"><path d="M4 14H.6V1.500H6L7.500 3 9 1.500h6V10"/><circle cx="9" cy="8.500" r="4" fill="#e3e6eb"/><path d="m12 11.500 3 3"/></svg>内容检查</button><button class="btn bt cr ms-1" aria-label="内容选项"><i class="tri"></i></button><span class="vr1 ms-0"></span>
  <div class="ms-auto d-flex align-items-center pe-3">
    <button class="btn bt sq me-1" aria-label="护眼"><svg width="16" height="16"><path d="M0 9.500c4-6 12-6 16 0-4 6-12 6-16 0zM8 0v3M2 2l1.500 2M14 2l-1.500 2"/><circle cx="8" cy="9.500" r="3"/></svg></button><span class="vr1"></span>
    <button class="btn bt sq on ms-1" aria-label="页面视图"><svg width="14" height="16"><path d="M.6 1H10l3.400 3.400V15H.6zM3 7h8M3 10h8"/></svg></button>
    <button class="btn bt sq" aria-label="大纲"><svg width="14" height="16"><path d="M0 2h2M4 2h10M2 6h2M6 6h8M2 10h2M6 10h8M0 14h2M4 14h10"/></svg></button>
    <button class="btn bt sq" aria-label="阅读"><svg width="16" height="16"><use href="#book"/></svg></button>
    <button class="btn bt sq" aria-label="网页"><svg width="16" height="16"><circle cx="8" cy="8" r="7"/><ellipse cx="8" cy="8" rx="3.500" ry="7"/><path d="M1 5.500h14M1 10.500h14M8 1v14"/></svg></button>
    <button class="btn bt sq me-1" aria-label="写作"><svg width="16" height="16"><use href="#pen"/></svg></button><span class="vr1 mx-2"></span>
    <button class="btn bt sq" aria-label="适合"><svg width="15" height="15"><use href="#full"/></svg></button>
    <button class="btn bt pct ms-1">94%<i class="tri"></i></button>
    <button class="btn bt mx-2 px-1" aria-label="缩小"><svg width="10" height="3" stroke-width="2"><path d="M0 1.500h10"/></svg></button>
    <input class="zoomer" type="range" min="0" max="100" value="39" aria-label="缩放">
    <button class="btn bt ms-2" aria-label="全屏"><svg width="14" height="14"><use href="#full"/></svg></button>
  </div>
</footer>

<svg class="sogou" width="36" height="36"><g transform="rotate(-12 18 18)"><rect x="3" y="3" width="30" height="29" rx="3" fill="#f0501e" stroke="none"/><text x="18" y="28.500">S</text></g></svg>
<div class="ime d-flex align-items-center justify-content-around"><strong>中</strong>
  <svg width="14" height="14"><circle cx="4" cy="4" r="2" stroke-width="1.800"/><path d="M11 7v2.500c0 1-1 2-2 2.500" stroke-width="3"/></svg>
  <svg width="13" height="17"><rect x="3.500" width="6" height="11" rx="3" fill="currentColor" stroke="none"/><path d="M1 7c0 7 11 7 11 0M6.500 12v4" stroke-width="2"/></svg>
  <svg width="16" height="13" stroke-width="1.500"><rect x=".8" y=".8" width="14.400" height="11.400" rx="1.500"/><path d="M3 4h10M3 6.500h10" stroke-dasharray="1.500 1.300"/><path d="M4.500 9.500h7"/></svg>
  <svg width="13" height="13"><g fill="currentColor" stroke="none"><rect width="6" height="6" rx="1"/><rect y="7" width="6" height="6" rx="1"/><rect x="7" y="7" width="6" height="6" rx="1"/></g><rect x="8" y="1" width="4" height="4" stroke-width="2"/></svg></div>
<div class="speed d-flex flex-column justify-content-between">
  <div class="d-flex align-items-center"><svg class="me-auto" width="7" height="9" stroke="#3fb0f0" stroke-width="1.800"><path d="M3.500 9V1M0 4.500 3.500 1 7 4.500"/></svg>0<em>K/s</em></div>
  <div class="d-flex align-items-center"><svg class="me-auto" width="7" height="9" stroke="#35c04a" stroke-width="1.800"><path d="M3.500 0v8M0 4.500 3.500 8 7 4.500"/></svg>0.2<em>K/s</em></div></div>
<svg class="ball" width="60" height="60"><circle cx="30" cy="30" r="29.500" fill="#565c6d" stroke="#3d424f"/><path d="M30 4a26 26 0 0 1 25 34" stroke="#3fd9c4" stroke-width="2"/><path d="M55 38a26 26 0 0 1-31 17" stroke="#b8e04c" stroke-width="2"/><path d="M24 55A26 26 0 0 1 4 33" stroke="#f0a83c" stroke-width="2"/><text x="12" y="38" font-size="24">73</text><text x="40" y="38" font-size="9">%</text></svg>
<div class="brand d-flex"><svg width="44" height="46"><path d="M42 5C22 3 2 14 1 28c0 9 10 12 18 5-6 3-10 1-9-5C12 16 26 8 42 5z" fill="#4f9bdc" stroke="none" opacity=".85"/><path d="M31 12c-10 3-18 10-18 15 4-6 9-8 12-5 4 5-3 14-20 20 20 1 32-7 33-17 0-6-7-9-14-5 1-3 3-6 7-8z" fill="#64bd68" stroke="none" opacity=".85"/></svg><div><div class="cn">极光下载站</div><div class="en">www.xz7.com</div></div></div>
</body>
</html>
